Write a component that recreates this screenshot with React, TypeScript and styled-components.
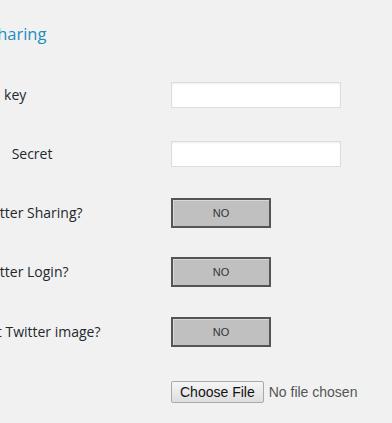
import { Fragment } from 'react';
import styled, { createGlobalStyle } from 'styled-components';

const GlobalStyle = createGlobalStyle`
  html, body {
    margin: 0;
    padding: 0;
    background: #f1f1f1;
    overflow: hidden;
  }
  body {
    font-family: 'Open Sans', 'Liberation Sans', sans-serif;
    font-size: 14px;
    color: #23282d;
  }
`;

const Wrap = styled.div`
  margin-left: -70px;
  width: 470px;
`;

const Heading = styled.h3`
  margin: 0;
  padding-top: 23px;
  height: 65px;
  box-sizing: border-box;
  font-size: 16.5px;
  font-weight: 400;
  line-height: 22px;
  color: #1e8cbe;
  white-space: nowrap;
`;

const FormTable = styled.div`
  display: grid;
  grid-template-columns: 241px 1fr;
  grid-template-rows: 59px 59px 59px 60px 60px 60px;
  align-items: center;
`;

const Label = styled.label`
  font-size: 14px;
  line-height: 20px;
  white-space: nowrap;
  color: #23282d;
`;

const Field = styled.div`
  display: flex;
  align-items: center;
`;

const TextInput = styled.input`
  box-sizing: border-box;
  width: 170px;
  height: 26px;
  margin: 0;
  background: #fff;
  border: 1px solid #ddd;
  box-shadow: inset 0 1px 2px rgba(0, 0, 0, 0.07);
  outline: none;
`;

const Toggle = styled.button`
  box-sizing: border-box;
  width: 100px;
  height: 30px;
  margin: 0;
  padding: 0;
  background: #c0c0c0;
  border: 2px solid #555;
  box-shadow: inset 1px 1px 0 #d8d8d8;
  font-family: 'Liberation Sans', Arial, sans-serif;
  font-size: 11px;
  color: #333;
  cursor: pointer;
`;

const FileInput = styled.input`
  font-family: 'Liberation Sans', Arial, sans-serif;
  font-size: 14px;
  color: #555;
  margin: 0;

  &::file-selector-button {
    font-family: 'Liberation Sans', Arial, sans-serif;
    font-size: 14px;
    color: #111;
    height: 22px;
    padding: 0 8px;
    margin-right: 5px;
    border: 1px solid #a9a9a9;
    border-radius: 2px;
    background: linear-gradient(#f6f6f6, #dedede);
  }
`;

const rows = [
  { label: 'Twitter API key', kind: 'text' },
  { label: 'Consumer\u2003Secret', kind: 'text' },
  { label: 'Enable Twitter Sharing?', kind: 'toggle' },
  { label: 'Enable Twitter Login?', kind: 'toggle' },
  { label: 'Set Default Twitter image?', kind: 'toggle' },
  { label: '', kind: 'file' },
];

export default function App() {
  return (
    <>
      <GlobalStyle />
      <Wrap>
        <Heading>Twitter Sharing</Heading>
        <FormTable>
          {rows.map((row, i) => (
            <Fragment key={i}>
              <Label>{row.label}</Label>
              <Field>
                {row.kind === 'text' && <TextInput type="text" />}
                {row.kind === 'toggle' && <Toggle type="button">NO</Toggle>}
                {row.kind === 'file' && <FileInput type="file" />}
              </Field>
            </Fragment>
          ))}
        </FormTable>
      </Wrap>
    </>
  );
}
